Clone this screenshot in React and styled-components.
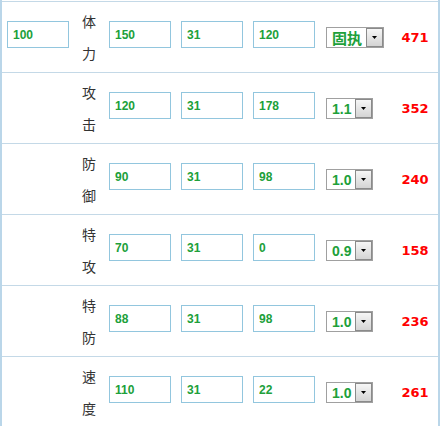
import React from 'react';
import styled, { createGlobalStyle } from 'styled-components';

const GlobalStyle = createGlobalStyle`
  html, body {
    margin: 0;
    padding: 0;
    background: #fff;
    overflow: hidden;
  }
`;

const Frame = styled.div`
  width: 436px;
  padding-top: 1px;
  border-left: 2px solid #bad6e9;
  border-right: 2px solid #bad6e9;
`;

const Row = styled.div`
  display: grid;
  grid-template-columns: 74px 33px 72px 72px 72px 67px 1fr;
  height: 70px;
  border-top: 1px solid #c4d9e7;
`;

const Cell = styled.div`
  display: flex;
  align-items: flex-start;
  padding-top: ${props => props.top || 0}px;
  padding-left: ${props => props.left || 0}px;
`;

const Label = styled.div`
  align-self: center;
  width: 14px;
  margin-left: 6px;
  font-family: "Noto Sans CJK SC", sans-serif;
  font-size: 14px;
  line-height: 32px;
  color: #333;
`;

const Field = styled.input`
  box-sizing: border-box;
  width: 62px;
  height: 27px;
  margin: 0;
  padding: 0 5px;
  border: 1px solid #92c6de;
  outline: none;
  background: #fff;
  font-family: "Liberation Sans", Arial, sans-serif;
  font-weight: bold;
  font-size: 12px;
  color: #20a03a;
`;

const Picker = styled.div`
  box-sizing: border-box;
  display: inline-flex;
  align-items: center;
  height: 21px;
  margin-left: 1px;
  padding-left: 5px;
  border: 1px solid #a0a0a0;
  background: #fff;
  font-family: "Liberation Sans", "Noto Sans CJK SC", sans-serif;
  font-weight: bold;
  font-size: ${props => (props.wide ? 15 : 14)}px;
  color: #20a03a;
`;

const Arrow = styled.span`
  box-sizing: border-box;
  display: flex;
  align-items: center;
  justify-content: center;
  width: 17px;
  height: 19px;
  margin-left: 4px;
  border: 1px solid #8a8a8a;
  background: linear-gradient(#f6f6f6, #d4d4d4);
`;

const Total = styled.div`
  align-self: center;
  text-align: center;
  font-family: "DejaVu Sans", Verdana, sans-serif;
  font-weight: bold;
  font-size: 13px;
  color: #ff0000;
`;

const rows = [
  { base: '100', label: '体力', a: '150', b: '31', c: '120', nature: '固执', total: 471 },
  { label: '攻击', a: '120', b: '31', c: '178', nature: '1.1', total: 352 },
  { label: '防御', a: '90', b: '31', c: '98', nature: '1.0', total: 240 },
  { label: '特攻', a: '70', b: '31', c: '0', nature: '0.9', total: 158 },
  { label: '特防', a: '88', b: '31', c: '98', nature: '1.0', total: 236 },
  { label: '速度', a: '110', b: '31', c: '22', nature: '1.0', total: 261 },
];

const StatRow = ({ row }) => (
  <Row>
    <Cell top={19} left={5}>
      {row.base && <Field defaultValue={row.base} readOnly />}
    </Cell>
    <Label>{row.label}</Label>
    <Cell top={19}><Field defaultValue={row.a} readOnly /></Cell>
    <Cell top={19}><Field defaultValue={row.b} readOnly /></Cell>
    <Cell top={19}><Field defaultValue={row.c} readOnly /></Cell>
    <Cell top={25}>
      <Picker wide={row.nature === '固执'}>
        {row.nature}
        <Arrow>
          <svg width="5" height="3" viewBox="0 0 5 3">
            <polygon points="0,0 5,0 2.5,3" fill="#000" />
          </svg>
        </Arrow>
      </Picker>
    </Cell>
    <Total>{row.total}</Total>
  </Row>
);

const App = () => (
  <>
    <GlobalStyle />
    <Frame>
      {rows.map(row => <StatRow key={row.label} row={row} />)}
    </Frame>
  </>
);

export default App;
